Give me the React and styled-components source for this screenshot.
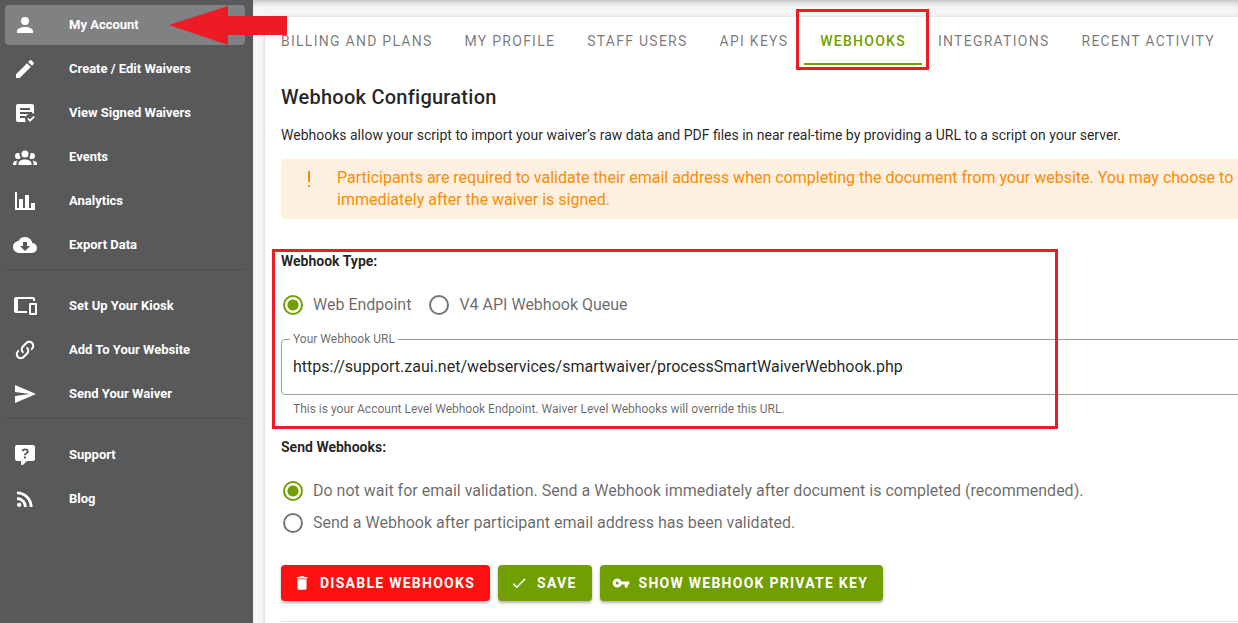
import React, { useState } from 'react';
import styled, { createGlobalStyle } from 'styled-components';

const GREEN = '#719e00';
const MARK_RED = '#ed1c24';

const GlobalStyle = createGlobalStyle`
  * {
    box-sizing: border-box;
  }

  body {
    margin: 0;
    background: #f6f6f6;
    color: rgba(0, 0, 0, 0.87);
    font-family: Roboto, "Liberation Sans", sans-serif;
    font-size: 14px;
    line-height: 20px;
    overflow: hidden;
  }

  button, input {
    font-family: inherit;
  }
`;

const Page = styled.div`
  position: relative;
  display: flex;
  min-height: 100vh;
`;

const Sidebar = styled.nav`
  flex: 0 0 253px;
  padding: 5px 8px 5px 5px;
  background: #58595b;
`;

const NavLink = styled.a`
  display: flex;
  align-items: center;
  gap: 32px;
  height: 40px;
  margin-bottom: 4px;
  padding: 0 8px;
  border-radius: 4px;
  background: ${props => props.$active ? '#808183' : 'transparent'};
  color: #fff;
  font-size: 13px;
  font-weight: 700;
  text-decoration: none;
`;

const NavDivider = styled.hr`
  height: 1px;
  margin: 0 0 16px;
  border: 0;
  background: #4c4d4f;
`;

const Svg = styled.svg`
  display: block;
  flex: none;
  width: ${props => props.$size}px;
  height: ${props => props.$size}px;
  fill: currentColor;
`;

const Main = styled.main`
  flex: 1;
  min-width: 0;
  padding: 17px 0 0 12px;
  overflow: hidden;
  box-shadow: inset 0 6px 6px -4px rgba(0, 0, 0, 0.25);
`;

// The card is wider than the viewport and runs out of it on the right
const Card = styled.section`
  min-height: 100vh;
  margin-right: -48px;
  background: #fff;
  box-shadow: 0 1px 4px rgba(0, 0, 0, 0.2);
`;

const Tabs = styled.div`
  display: flex;
  height: 48px;
`;

const Tab = styled.button`
  position: relative;
  flex: none;
  padding: 0 16px;
  border: 0;
  background: none;
  color: ${props => props.$active ? GREEN : 'rgba(0, 0, 0, 0.54)'};
  box-shadow: ${props => props.$active ? `inset 0 -2px ${GREEN}` : 'none'};
  font-size: 14px;
  font-weight: ${props => props.$active ? 500 : 400};
  letter-spacing: 0.09em;
  text-transform: uppercase;
  white-space: nowrap;
`;

const TabMark = styled.span`
  position: absolute;
  inset: -8px -7px -5px -8px;
  border: 3px solid ${MARK_RED};
  pointer-events: none;
`;

const Content = styled.div`
  padding: 16px;
`;

const Title = styled.h1`
  margin: 0 0 12px;
  font-size: 20px;
  font-weight: 500;
  line-height: 32px;
  letter-spacing: 0.0125em;
`;

const Intro = styled.p`
  margin: 0 0 14px;
`;

const Alert = styled.div`
  display: flex;
  gap: 16px;
  margin-bottom: 30px;
  padding: 8px 16px;
  border-radius: 4px;
  background: #fef0e0;
  color: #fb8c00;
  font-size: 16px;
  line-height: 22px;
  white-space: nowrap;
`;

const Group = styled.div`
  position: relative;
`;

const GroupTitle = styled.h2`
  margin: 0;
  font-size: 14px;
  font-weight: 700;
  line-height: 24px;
`;

const GroupMark = styled.span`
  position: absolute;
  inset: 0 auto 6px -9px;
  width: 786px;
  border: 3px solid ${MARK_RED};
  pointer-events: none;
`;

const Radios = styled.div`
  display: flex;
  flex-direction: ${props => props.$stacked ? 'column' : 'row'};
  gap: ${props => props.$stacked ? '8px' : '16px'};
  padding: 20px 0 22px;
`;

const RadioLabel = styled.label`
  display: flex;
  align-items: center;
  gap: 10px;
  height: 24px;
  color: rgba(0, 0, 0, 0.6);
  font-size: 16px;
`;

const Radio = styled.input`
  appearance: none;
  width: 20px;
  height: 20px;
  margin: 0 0 0 2px;
  border: 2px solid #757575;
  border-radius: 50%;

  &:checked {
    border-color: ${GREEN};
    background: radial-gradient(circle, ${GREEN} 5px, transparent 6px);
  }
`;

const Field = styled.div`
  position: relative;
`;

const FieldLabel = styled.label`
  position: absolute;
  top: -8px;
  left: 9px;
  padding: 0 3px;
  background: #fff;
  color: rgba(0, 0, 0, 0.6);
  font-size: 12px;
  line-height: 16px;
`;

const TextInput = styled.input`
  display: block;
  width: 100%;
  height: 56px;
  padding: 0 11px 2px;
  border: 1px solid #9e9e9e;
  border-radius: 4px;
  background: #fff;
  color: rgba(0, 0, 0, 0.87);
  font-size: 16px;
`;

const Hint = styled.p`
  margin: 0;
  padding: 6px 12px 18px;
  color: rgba(0, 0, 0, 0.6);
  font-size: 12px;
  line-height: 16px;
`;

const Actions = styled.div`
  display: flex;
  gap: 8px;
  margin: 8px 0 20px;
`;

const Button = styled.button`
  display: flex;
  align-items: center;
  gap: 9px;
  height: 36px;
  padding: 0 15px 0 12px;
  border: 0;
  border-radius: 4px;
  background: ${props => props.$danger ? '#ff1010' : GREEN};
  box-shadow: 0 2px 3px rgba(0, 0, 0, 0.3);
  color: #fff;
  font-size: 14px;
  font-weight: 700;
  letter-spacing: 0.09em;
  text-transform: uppercase;
  white-space: nowrap;
`;

const Rule = styled.hr`
  margin: 0;
  border: 0;
  border-top: 1px solid #e0e0e0;
`;

const Arrow = styled.svg`
  position: absolute;
  top: 6px;
  left: 169px;
  width: 118px;
  height: 39px;
  fill: ${MARK_RED};
  pointer-events: none;
`;

const icons = {
  account: 'M12,4A4,4 0 0,1 16,8A4,4 0 0,1 12,12A4,4 0 0,1 8,8A4,4 0 0,1 12,4M12,14C16.42,14 20,15.79 20,18V20H4V18C4,15.79 7.58,14 12,14Z',
  pencil: 'M20.71,7.04C21.1,6.65 21.1,6 20.71,5.63L18.37,3.29C18,2.9 17.35,2.9 16.96,3.29L15.12,5.12L18.87,8.87M3,17.25V21H6.75L17.81,9.93L14.06,6.18L3,17.25Z',
  signed: 'M17,21L14.25,18L15.41,16.84L17,18.43L20.59,14.84L21.75,16.25M12.8,21H5C3.89,21 3,20.11 3,19V5C3,3.89 3.89,3 5,3H19C20.11,3 21,3.89 21,5V12.8C20.39,12.45 19.72,12.2 19,12.08V11H7V13H15.69C14.3,13.6 13.17,14.6 12.5,15.8L12,15H7V17H12.08C12.03,17.33 12,17.66 12,18C12,19.09 12.29,20.12 12.8,21M17,7H7V9H17V7Z',
  group: 'M12,5.5A3.5,3.5 0 0,1 15.5,9A3.5,3.5 0 0,1 12,12.5A3.5,3.5 0 0,1 8.5,9A3.5,3.5 0 0,1 12,5.5M5,8C5.56,8 6.08,8.15 6.53,8.42C6.38,9.85 6.8,11.27 7.66,12.38C7.16,13.34 6.16,14 5,14A3,3 0 0,1 2,11A3,3 0 0,1 5,8M19,8A3,3 0 0,1 22,11A3,3 0 0,1 19,14C17.84,14 16.84,13.34 16.34,12.38C17.2,11.27 17.62,9.85 17.47,8.42C17.92,8.15 18.44,8 19,8M5.5,18.25C5.5,16.18 8.41,14.5 12,14.5C15.59,14.5 18.5,16.18 18.5,18.25V20H5.5V18.25M0,20V18.5C0,17.11 1.89,15.94 4.45,15.6C3.86,16.28 3.5,17.22 3.5,18.25V20H0M24,20H20.5V18.25C20.5,17.22 20.14,16.28 19.55,15.6C22.11,15.94 24,17.11 24,18.5V20Z',
  chart: 'M22,21H2V3H4V19H6V10H10V19H12V6H16V19H18V14H22V21Z',
  cloud: 'M17,13L12,18L7,13H10V9H14V13M19.35,10.03C18.67,6.59 15.64,4 12,4C9.11,4 6.6,5.64 5.35,8.03C2.34,8.36 0,10.9 0,14A6,6 0 0,0 6,20H19A5,5 0 0,0 24,15C24,12.36 21.95,10.22 19.35,10.03Z',
  devices: 'M23,9H17A1,1 0 0,0 16,10V20A1,1 0 0,0 17,21H23A1,1 0 0,0 24,20V10A1,1 0 0,0 23,9M22,19H18V11H22M20,3H3A2,2 0 0,0 1,5V17A2,2 0 0,0 3,19H14V17H5V5H20V7H22V5A2,2 0 0,0 20,3Z',
  link: 'M10.59,13.41C11,13.8 11,14.44 10.59,14.83C10.2,15.22 9.56,15.22 9.17,14.83C7.22,12.88 7.22,9.71 9.17,7.76V7.76L12.71,4.22C14.66,2.27 17.83,2.27 19.78,4.22C21.73,6.17 21.73,9.34 19.78,11.29L18.29,12.78C18.3,11.96 18.17,11.14 17.89,10.36L18.36,9.88C19.54,8.71 19.54,6.81 18.36,5.64C17.19,4.46 15.29,4.46 14.12,5.64L10.59,9.17C9.41,10.34 9.41,12.24 10.59,13.41M13.41,9.17C13.8,8.78 14.44,8.78 14.83,9.17C16.78,11.12 16.78,14.29 14.83,16.24V16.24L11.29,19.78C9.34,21.73 6.17,21.73 4.22,19.78C2.27,17.83 2.27,14.66 4.22,12.71L5.71,11.22C5.7,12.04 5.83,12.86 6.11,13.65L5.64,14.12C4.46,15.29 4.46,17.19 5.64,18.36C6.81,19.54 8.71,19.54 9.88,18.36L13.41,14.83C14.59,13.66 14.59,11.76 13.41,10.59C13,10.2 13,9.56 13.41,9.17Z',
  send: 'M2,21L23,12L2,3V10L17,12L2,14V21Z',
  help: 'M4,2A2,2 0 0,0 2,4V16A2,2 0 0,0 4,18H8V21A1,1 0 0,0 9,22H9.5C9.75,22 10,21.9 10.2,21.71L13.9,18H20A2,2 0 0,0 22,16V4A2,2 0 0,0 20,2H4M12.19,5.5C13.3,5.5 14.18,5.77 14.81,6.29C15.44,6.8 15.76,7.5 15.76,8.4C15.76,8.95 15.58,9.46 15.23,9.91C14.88,10.36 14.41,10.72 13.83,11C13.5,11.17 13.29,11.34 13.18,11.54C13.06,11.74 13,12 13,12.28H11C11,11.78 11.1,11.36 11.29,11.05C11.5,10.74 11.85,10.4 12.37,10.05C12.85,9.8 13.2,9.52 13.42,9.2C13.63,8.9 13.74,8.6 13.74,8.3C13.74,7.94 13.6,7.66 13.34,7.45C13.07,7.25 12.69,7.15 12.19,7.15C11.77,7.15 11.4,7.24 11.13,7.41C10.86,7.58 10.7,7.84 10.7,8.19H8.77C8.75,7.3 9.08,6.62 9.69,6.17C10.31,5.72 11.14,5.5 12.19,5.5M11,13.5H13V15.5H11V13.5Z',
  rss: 'M6.18,15.64A2.18,2.18 0 0,1 8.36,17.82C8.36,19 7.38,20 6.18,20C5,20 4,19 4,17.82A2.18,2.18 0 0,1 6.18,15.64M4,4.44A15.56,15.56 0 0,1 19.56,20H16.73A12.73,12.73 0 0,0 4,7.27V4.44M4,10.1A9.9,9.9 0 0,1 13.9,20H11.07A7.07,7.07 0 0,0 4,12.93V10.1Z',
  exclamation: 'M11,4H13V15H11V4M11,18H13V20H11V18Z',
  trash: 'M19,4H15.5L14.5,3H9.5L8.5,4H5V6H19M6,19A2,2 0 0,0 8,21H16A2,2 0 0,0 18,19V7H6V19Z',
  check: 'M21,7L9,19L3.5,13.5L4.91,12.09L9,16.17L19.59,5.59L21,7Z',
  key: 'M7,14A2,2 0 0,1 5,12A2,2 0 0,1 7,10A2,2 0 0,1 9,12A2,2 0 0,1 7,14M12.65,10C11.83,7.67 9.61,6 7,6A6,6 0 0,0 1,12A6,6 0 0,0 7,18C9.61,18 11.83,16.33 12.65,14H17V18H21V14H23V10H12.65Z',
};

const navGroups = [
  [
    { icon: 'account', text: 'My Account', active: true },
    { icon: 'pencil', text: 'Create / Edit Waivers' },
    { icon: 'signed', text: 'View Signed Waivers' },
    { icon: 'group', text: 'Events' },
    { icon: 'chart', text: 'Analytics' },
    { icon: 'cloud', text: 'Export Data' },
  ],
  [
    { icon: 'devices', text: 'Set Up Your Kiosk' },
    { icon: 'link', text: 'Add To Your Website' },
    { icon: 'send', text: 'Send Your Waiver' },
  ],
  [
    { icon: 'help', text: 'Support' },
    { icon: 'rss', text: 'Blog' },
  ],
];

const tabs = [
  'Billing and Plans',
  'My Profile',
  'Staff Users',
  'API Keys',
  'Webhooks',
  'Integrations',
  'Recent Activity',
];

const Icon = ({ name, size = 24 }) => (
  <Svg viewBox="0 0 24 24" $size={size} aria-hidden="true">
    <path fillRule="evenodd" d={icons[name]} />
  </Svg>
);

const RadioOption = ({ name, value, current, onPick, children }) => (
  <RadioLabel>
    <Radio type="radio" name={name} checked={current === value} onChange={() => onPick(value)} />
    {children}
  </RadioLabel>
);

const App = () => {
  const [type, setType] = useState('endpoint');
  const [timing, setTiming] = useState('immediate');
  const [url, setUrl] = useState('https://support.zaui.net/webservices/smartwaiver/processSmartWaiverWebhook.php');

  return (
    <Page>
      <GlobalStyle />
      <Sidebar>
        {navGroups.map((items, i) => (
          <React.Fragment key={items[0].text}>
            {i > 0 && <NavDivider />}
            {items.map(item => (
              <NavLink key={item.text} href="#" $active={item.active}>
                <Icon name={item.icon} />
                {item.text}
              </NavLink>
            ))}
          </React.Fragment>
        ))}
      </Sidebar>

      <Main>
        <Card>
          <Tabs role="tablist">
            {tabs.map(tab => (
              <Tab key={tab} type="button" role="tab" aria-selected={tab === 'Webhooks'} $active={tab === 'Webhooks'}>
                {tab}
                {tab === 'Webhooks' && <TabMark />}
              </Tab>
            ))}
          </Tabs>

          <Content>
            <Title>Webhook Configuration</Title>
            <Intro>
              Webhooks allow your script to import your waiver’s raw data and PDF files in near real-time by providing a URL to a script on your server.
            </Intro>

            <Alert role="alert">
              <Icon name="exclamation" />
              <div>
                Participants are required to validate their email address when completing the document from your website. You may choose to
                <br />
                immediately after the waiver is signed.
              </div>
            </Alert>

            <Group>
              <GroupTitle id="type-title">Webhook Type:</GroupTitle>
              <Radios role="radiogroup" aria-labelledby="type-title">
                <RadioOption name="type" value="endpoint" current={type} onPick={setType}>Web Endpoint</RadioOption>
                <RadioOption name="type" value="queue" current={type} onPick={setType}>V4 API Webhook Queue</RadioOption>
              </Radios>
              <Field>
                <FieldLabel htmlFor="webhook-url">Your Webhook URL</FieldLabel>
                <TextInput id="webhook-url" type="text" value={url} onChange={e => setUrl(e.target.value)} />
              </Field>
              <Hint>This is your Account Level Webhook Endpoint. Waiver Level Webhooks will override this URL.</Hint>
              <GroupMark />
            </Group>

            <Group>
              <GroupTitle id="timing-title">Send Webhooks:</GroupTitle>
              <Radios $stacked role="radiogroup" aria-labelledby="timing-title">
                <RadioOption name="timing" value="immediate" current={timing} onPick={setTiming}>
                  Do not wait for email validation. Send a Webhook immediately after document is completed (recommended).
                </RadioOption>
                <RadioOption name="timing" value="validated" current={timing} onPick={setTiming}>
                  Send a Webhook after participant email address has been validated.
                </RadioOption>
              </Radios>
            </Group>

            <Actions>
              <Button type="button" $danger><Icon name="trash" size={18} />Disable Webhooks</Button>
              <Button type="button"><Icon name="check" size={18} />Save</Button>
              <Button type="button"><Icon name="key" size={18} />Show Webhook Private Key</Button>
            </Actions>
            <Rule />
          </Content>
        </Card>
      </Main>

      <Arrow viewBox="0 0 118 39" aria-hidden="true">
        <path d="M0,19L59,0V10H118V29H59V39Z" />
      </Arrow>
    </Page>
  );
};

export default App;
